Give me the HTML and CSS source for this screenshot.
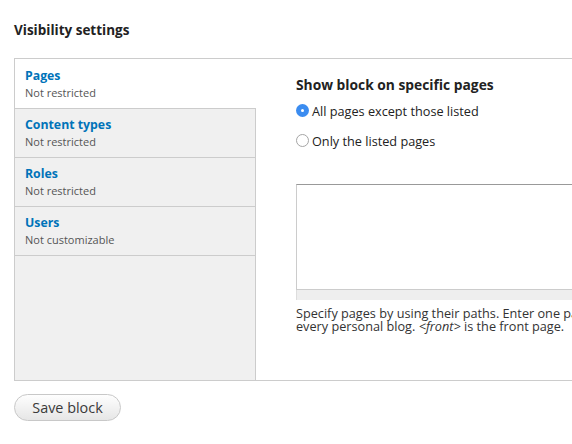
FILE: index.html
```html
<!DOCTYPE html>
<html>
<head>
<meta charset="utf-8">
<link rel="stylesheet" href="styles.css">
</head>
<body>
<div class="page">
  <h2 class="section-title">Visibility settings</h2>
  <div class="vtabs">
    <ul class="vtabs-menu">
      <li class="vtab selected"><a class="vtab-title">Pages</a><span class="vtab-summary">Not restricted</span></li>
      <li class="vtab"><a class="vtab-title">Content types</a><span class="vtab-summary">Not restricted</span></li>
      <li class="vtab"><a class="vtab-title">Roles</a><span class="vtab-summary">Not restricted</span></li>
      <li class="vtab"><a class="vtab-title">Users</a><span class="vtab-summary">Not customizable</span></li>
    </ul>
    <div class="vtabs-pane">
      <div class="pane-label">Show block on specific pages</div>
      <div class="radio-row"><span class="radio checked"></span><span class="radio-label">All pages except those listed</span></div>
      <div class="radio-row"><span class="radio"></span><span class="radio-label">Only the listed pages</span></div>
      <div class="textarea-wrap">
        <div class="textarea"></div>
        <div class="grippie"></div>
      </div>
      <div class="description">Specify pages by using their paths. Enter one path per line. The '*' character is a wildcard. Example paths are <em>blog</em> for the blog page and <em>blog/*</em> for<br>every personal blog. <em>&lt;front&gt;</em> is the front page.</div>
    </div>
  </div>
  <button class="btn">Save block</button>
</div>
</body>
</html>
```

FILE: styles.css
```css
html, body {
  margin: 0;
  padding: 0;
  overflow: hidden;
  background: #fff;
}
body {
  font-family: "Open Sans", "Noto Sans", sans-serif;
  color: #333;
}
.page {
  padding: 0 0 0 14px;
  width: 800px;
}
.section-title {
  margin: 0;
  padding-top: 21px;
  height: 58px;
  box-sizing: border-box;
  font-size: 13.5px;
  line-height: 18px;
  font-weight: 700;
  color: #222;
}
.vtabs {
  display: flex;
  border: 1px solid #ccc;
  width: 760px;
  height: 323px;
  box-sizing: border-box;
}
.vtabs-menu {
  list-style: none;
  margin: 0;
  padding: 0;
  width: 240px;
  flex: none;
  background: #f0f0f0;
  border-right: 1px solid #ccc;
}
.vtab {
  display: flex;
  flex-direction: column;
  height: 49px;
  box-sizing: border-box;
  padding: 8px 10px 0;
  border-bottom: 1px solid #ccc;
}
.vtab.selected {
  background: #fff;
  margin-right: -1px;
  height: 50px;
  padding-top: 9px;
}
.vtab-title {
  color: #0073b9;
  font-weight: 700;
  font-size: 12.3px;
  line-height: 16px;
}
.vtab-summary {
  color: #555;
  font-size: 11px;
  line-height: 17px;
}
.vtabs-pane {
  flex: 1;
  padding: 17px 0 0 40px;
}
.pane-label {
  font-weight: 700;
  font-size: 13.8px;
  line-height: 18px;
  color: #222;
  margin-bottom: 8px;
}
.radio-row {
  display: flex;
  align-items: center;
  height: 17px;
  margin-bottom: 13px;
  font-size: 12.7px;
  color: #222;
}
.radio {
  width: 13px;
  height: 13px;
  box-sizing: border-box;
  border-radius: 50%;
  border: 1px solid #a5a5a5;
  background: #fff;
  margin-right: 3px;
  position: relative;
  flex: none;
}
.radio.checked {
  border: none;
  background: #3b8cf0;
}
.radio.checked::after {
  content: "";
  position: absolute;
  left: 5px;
  top: 5px;
  width: 3px;
  height: 3px;
  border-radius: 50%;
  background: #fff;
}
.textarea-wrap {
  margin-top: 35px;
  width: 400px;
}
.textarea {
  height: 106px;
  box-sizing: border-box;
  border: 1px solid #ccc;
  border-top-color: #999;
  background: #fff;
}
.grippie {
  height: 10px;
  background: #eee;
  border-left: 1px solid #ddd;
}
.description {
  margin-top: 7px;
  font-size: 12.7px;
  line-height: 13px;
  color: #333;
  white-space: nowrap;
}
.btn {
  margin-top: 13px;
  width: 107px;
  height: 27px;
  border: 1px solid #c8c8c8;
  border-radius: 14px;
  background: linear-gradient(#fefefe, #e6e6e6);
  font-family: "Open Sans", "Noto Sans", sans-serif;
  font-size: 14.4px;
  color: #3a3a3a;
  padding: 0;
  display: block;
}
```
